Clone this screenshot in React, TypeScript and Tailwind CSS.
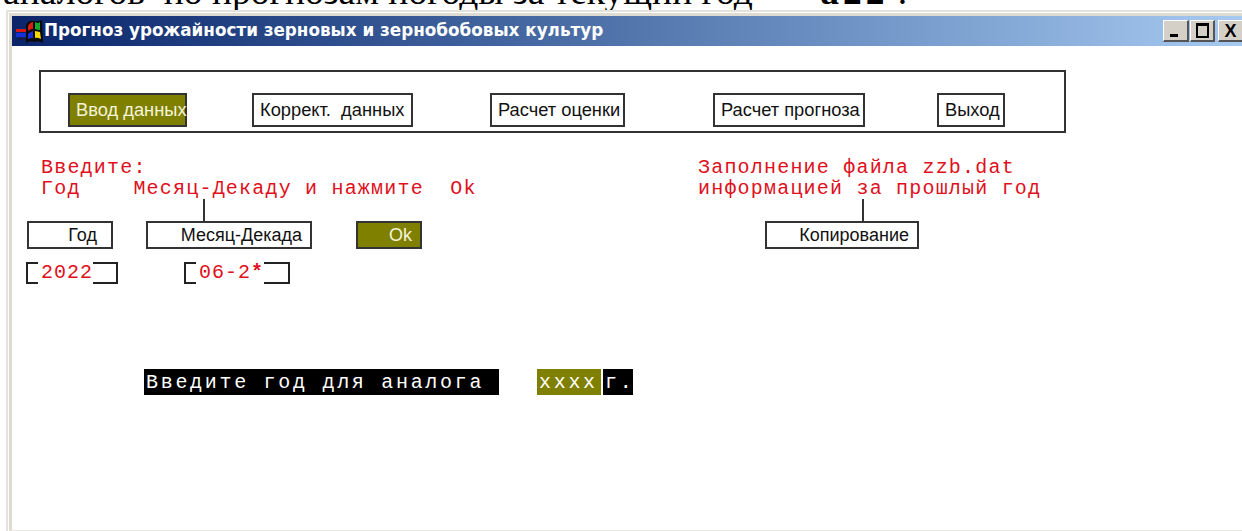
import React from 'react';

const Flag = () => (
  <svg width="28" height="24" viewBox="0 0 28 24" className="shrink-0">
    <rect x="1" y="10" width="10" height="3" fill="#d81818" />
    <rect x="1" y="14" width="10" height="4" fill="#1830d8" />
    <rect x="3" y="19" width="8" height="2" fill="#1a1a40" />
    <path d="M11 6 Q14 1 19 2 Q24 3 27 1 L28 24 Q23 21 19 23 Q15 21 11 24Z" fill="#0a0a0a" />
    <path d="M13 7 Q15 3 18 3 L18 10 Q15 10 13 12Z" fill="#d82010" />
    <path d="M20 3 Q23 5 25 3 L25 11 Q22 11 20 10Z" fill="#18a830" />
    <path d="M13 15 Q15 13 18 12 L18 19 Q15 19 13 20Z" fill="#1830d8" />
    <path d="M20 12 L25 13 L26 20 Q22 18 20 19Z" fill="#f0d800" />
  </svg>
);

const CaptionButton = ({ children, className }: { children: React.ReactNode; className?: string }) => (
  <div
    className={`h-[22px] bg-[#d4d0c8] border-t border-l border-t-white border-l-white border-b-2 border-r-2 border-b-[#555] border-r-[#555] flex items-center justify-center ${className ?? ''}`}
  >
    {children}
  </div>
);

const Btn = ({ label, className, olive }: { label: string; className: string; olive?: boolean }) => (
  <div
    className={`h-[34px] border-2 border-[#333] flex items-center pl-[6px] text-[18.3px] leading-none whitespace-pre font-['Liberation_Sans',sans-serif] ${
      olive ? 'bg-[#808000] text-[#f4f4d8]' : 'bg-white text-[#111]'
    } ${className}`}
  >
    {label}
  </div>
);

const FieldBtn = ({ label, className, olive }: { label: string; className: string; olive?: boolean }) => (
  <div
    className={`h-[28px] border-2 border-[#333] flex items-center justify-end text-[18px] leading-none whitespace-nowrap font-['Liberation_Sans',sans-serif] ${
      olive ? 'bg-[#808000] text-[#f4f4d8]' : 'bg-white text-[#111]'
    } ${className}`}
  >
    {label}
  </div>
);

const Bracketed = ({ value, mark, className }: { value: string; mark?: string; className: string }) => (
  <div className={`h-[22px] flex items-stretch ${className}`}>
    <div className="w-[12px] border-y-2 border-l-2 border-[#222]" />
    <div className="pl-[3px] text-[#e01020] text-[20px] leading-[22px] tracking-[1px] whitespace-pre">
      {value}
      {mark && <span className="font-bold">{mark}</span>}
    </div>
    <div className="flex-1 border-y-2 border-r-2 border-[#222]" />
  </div>
);

export default function App() {
  return (
    <div className="w-[1242px] h-[531px] overflow-hidden bg-white flex flex-col font-['Liberation_Mono',monospace]">
      <div className="h-[10px] overflow-hidden">
        <div className="-mt-[28px] ml-[3px] text-[37.5px] leading-[40px] text-black whitespace-pre font-['Liberation_Serif',serif]">
          аналогов  по прогнозам погоды за текущий год <span className="ml-[58px] font-bold tracking-[4px]">а22</span> .
        </div>
      </div>

      {/* window frame */}
      <div className="flex-1 ml-[6px] border-t-2 border-l-2 border-[#e4e2da] bg-white flex flex-col">
        <div className="flex-1 border-t-[3px] border-l-[3px] border-[#dedbd2] ml-[1px] mt-[1px] border-b border-b-[#e8e6df] flex flex-col">
          <div className="h-[30px] flex items-center justify-between bg-gradient-to-r from-[#0a246a] to-[#a6caf0]">
            <div className="flex items-center text-white font-bold text-[16.8px] font-['DejaVu_Sans',sans-serif] whitespace-nowrap pl-[3px]">
              <Flag />
              <span className="ml-[1px]">Прогноз урожайности зерновых и зернобобовых культур</span>
            </div>
            <div className="flex items-center mr-[-2px]">
              <CaptionButton className="w-[26px]">
                <div className="w-[8px] h-[3px] bg-black mt-[10px] mr-[4px]" />
              </CaptionButton>
              <CaptionButton className="w-[25px] ml-[1px]">
                <div className="w-[13px] h-[15px] border-2 border-t-[3px] border-black" />
              </CaptionButton>
              <CaptionButton className="w-[26px] ml-[3px]">
                <span className="text-[18px] font-bold leading-none text-black font-['Liberation_Sans',sans-serif]">X</span>
              </CaptionButton>
            </div>
          </div>

          <div className="flex-1 bg-white flex flex-col">
            {/* main command bar */}
            <div className="mt-[24px] ml-[27px] w-[1027px] h-[63px] border-2 border-[#333] flex items-end pb-[4px] pl-[27px]">
              <Btn label="Ввод данных" olive className="w-[119px]" />
              <Btn label="Коррект.  данных" className="w-[161px] ml-[65px]" />
              <Btn label="Расчет оценки" className="w-[135px] ml-[77px]" />
              <Btn label="Расчет прогноза" className="w-[152px] ml-[88px]" />
              <Btn label="Выход" className="w-[68px] ml-[72px]" />
            </div>

            {/* hints */}
            <div className="mt-[24px] flex text-[#e01020] text-[20px] leading-[21px] tracking-[1.2px] whitespace-pre">
              <div className="ml-[29px] w-[657px]">
                <div>Введите:</div>
                <div>Год    Месяц-Декаду и нажмите  Ok</div>
              </div>
              <div>
                <div>Заполнение файла zzb.dat</div>
                <div>информацией за прошлый год</div>
              </div>
            </div>

            {/* connector lines */}
            <div className="flex h-[22px]">
              <div className="w-[2px] h-[22px] bg-[#333] ml-[191px]" />
              <div className="w-[2px] h-[22px] bg-[#333] ml-[657px]" />
            </div>

            <div className="flex">
              <FieldBtn label="Год" className="w-[86px] ml-[15px] pr-[14px]" />
              <FieldBtn label="Месяц-Декада" className="w-[166px] ml-[33px] pr-[8px]" />
              <FieldBtn label="Ok" olive className="w-[66px] ml-[44px] pr-[8px]" />
              <FieldBtn label="Копирование" className="w-[154px] ml-[343px] pr-[8px]" />
            </div>

            <div className="flex mt-[13px]">
              <Bracketed value="2022" className="w-[92px] ml-[14px]" />
              <Bracketed value="06-2" mark="*" className="w-[106px] ml-[66px]" />
            </div>

            {/* year prompt */}
            <div className="flex mt-[85px] ml-[132px] h-[26px] text-[20px] leading-[28px] tracking-[2.7px] whitespace-pre">
              <div className="w-[355px] bg-black text-white pl-[2px]">Введите год для аналога</div>
              <div className="w-[64px] ml-[38px] bg-[#808000] text-white pl-[2px]">xxxx</div>
              <div className="w-[30px] ml-[2px] bg-black text-white pl-[2px]">г.</div>
            </div>
          </div>
        </div>
      </div>
    </div>
  );
}
